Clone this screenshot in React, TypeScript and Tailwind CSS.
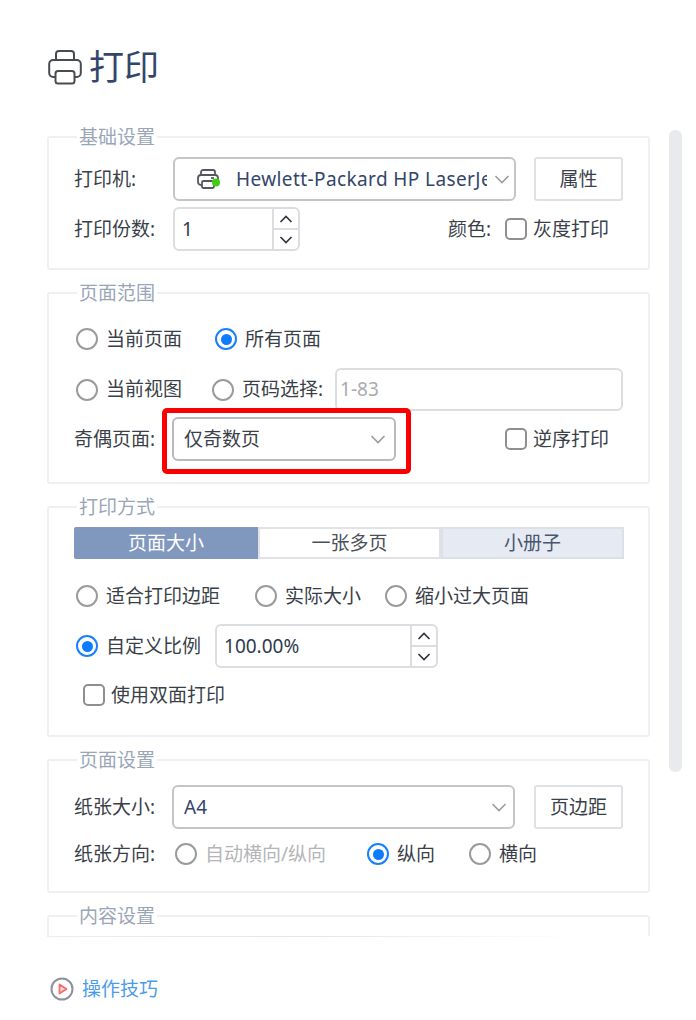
const font = { fontFamily: '"Noto Sans", "Noto Sans CJK SC", sans-serif' };

function Chevron() {
  return (
    <svg width="16" height="9" viewBox="0 0 16 9" fill="none" className="shrink-0">
      <path d="M1.5 1 8 7.5 14.500 1" stroke="#9a9da3" strokeWidth="1.6" />
    </svg>
  );
}

function Radio({ label, checked, disabled, className }: { label: string; checked?: boolean; disabled?: boolean; className?: string }) {
  return (
    <div className={`flex items-center gap-2 ${className ?? ""}`}>
      {checked ? (
        <span className="flex size-[22px] items-center justify-center rounded-full border-2 border-[#1a7fff]">
          <span className="size-[11px] rounded-full bg-[#0f7bff]" />
        </span>
      ) : (
        <span className="size-[22px] rounded-full border-2 border-[#9b9b9b]" />
      )}
      <span className={disabled ? "text-[#b3b5b8]" : "text-[#3a3f49]"}>{label}</span>
    </div>
  );
}

function Checkbox({ label, className }: { label: string; className?: string }) {
  return (
    <div className={`flex items-center gap-[6px] ${className ?? ""}`}>
      <span className="size-[22px] rounded-[5px] border-2 border-[#8f8f8f]" />
      <span className="text-[#3a3f49]">{label}</span>
    </div>
  );
}

function Spinner({ value, width }: { value: string; width: string }) {
  return (
    <div className={`flex h-[44px] items-center rounded-md border-2 border-[#dcdde0] ${width}`}>
      <span className="flex-1 pt-[1px] pl-[7px] text-[#2f3a4f]">{value}</span>
      <div className="flex h-full w-[26px] flex-col border-l-2 border-[#dcdde0]">
        <span className="flex flex-1 items-center justify-center border-b-2 border-[#dcdde0]">
          <svg width="14" height="8" viewBox="0 0 14 8" fill="none">
            <path d="M1.500 7 7 1.500 12.500 7" stroke="#33363c" strokeWidth="1.700" />
          </svg>
        </span>
        <span className="flex flex-1 items-center justify-center">
          <svg width="14" height="8" viewBox="0 0 14 8" fill="none">
            <path d="M1.500 1 7 6.500 12.500 1" stroke="#33363c" strokeWidth="1.700" />
          </svg>
        </span>
      </div>
    </div>
  );
}

function Group({ title, height, children }: { title: string; height: string; children?: React.ReactNode }) {
  return (
    <fieldset className={`rounded-[3px] border-2 border-[#eef0f3] pr-[24px] pl-[25px] ${height}`}>
      <legend className="ml-[3px] px-[2px] text-[19px] leading-[26px] text-[#9aa6b8]">{title}</legend>
      {children}
    </fieldset>
  );
}

function OutlineButton({ label }: { label: string }) {
  return (
    <button className="h-[44px] w-[89px] rounded-[3px] border-2 border-[#dfe1e5] text-[#3a3f49]">{label}</button>
  );
}

export default function App() {
  return (
    <div className="flex h-[1020px] w-[696px] flex-col overflow-hidden bg-white text-[19px]" style={font}>
      <header className="flex h-[124px] shrink-0 items-start pt-[44px] pl-[48px]">
        <svg width="34" height="36" viewBox="0 0 34 36" fill="none" stroke="#484b50" strokeWidth="2" className="mt-[5px]">
          <path d="M8 11V5a3 3 0 0 1 3-3h12a3 3 0 0 1 3 3v6" />
          <rect x="1.200" y="11" width="31.600" height="17" rx="4" />
          <rect x="7.500" y="22" width="19" height="12.500" rx="2.500" fill="#fff" />
        </svg>
        <h1 className="ml-[7px] text-[35px] leading-[46px] text-[#33456b]">打印</h1>
      </header>

      <div className="flex h-[812px] shrink-0 items-start">
        <div className="ml-[47px] flex h-full w-[603px] flex-col gap-[10px] overflow-hidden">
          <Group title="基础设置" height="h-[146px] shrink-0">
            <div className="mt-[7px] flex h-[44px] items-center">
              <span className="w-[99px] text-[#3a3f49]">打印机:</span>
              <div className="flex h-[44px] w-[343px] items-center rounded-md border-2 border-[#c4c5c8] pl-[21px]">
                <svg width="24" height="24" viewBox="0 0 24 24" fill="none" stroke="#55585e" strokeWidth="1.800" className="shrink-0">
                  <path d="M5 8V5a2 2 0 0 1 2-2h10a2 2 0 0 1 2 2v3" />
                  <rect x="2" y="8" width="20" height="10" rx="3" />
                  <rect x="6" y="14" width="12" height="7" rx="1.500" fill="#fff" />
                  <path d="M15 11h3" />
                  <circle cx="20" cy="15.500" r="4" fill="#43cc12" stroke="none" />
                </svg>
                <span className="ml-[16px] w-[251px] overflow-hidden text-[19px] tracking-[0.4px] whitespace-nowrap text-[#33456b]">
                  Hewlett-Packard HP LaserJet
                </span>
                <span className="ml-[7px]"><Chevron /></span>
              </div>
              <span className="ml-[18px]"><OutlineButton label="属性" /></span>
            </div>
            <div className="mt-[6px] flex h-[44px] items-center">
              <span className="w-[99px] text-[#3a3f49]">打印份数:</span>
              <Spinner value="1" width="w-[127px]" />
              <span className="ml-[148px] w-[57px] text-[#3a3f49]">颜色:</span>
              <Checkbox label="灰度打印" />
            </div>
          </Group>

          <Group title="页面范围" height="h-[204px] shrink-0">
            <div className="mt-[11px] flex h-[44px] items-center">
              <Radio label="当前页面" className="ml-[2px]" />
              <Radio label="所有页面" checked className="ml-[33px]" />
            </div>
            <div className="mt-[7px] flex h-[43px] items-center">
              <Radio label="当前视图" className="ml-[2px]" />
              <Radio label="页码选择:" className="ml-[30px]" />
              <div className="ml-[12px] flex h-[43px] w-[288px] items-center rounded-md border-2 border-[#dcdde0] pl-[3px] text-[#a9abae]">
                1-83
              </div>
            </div>
            <div className="mt-[6px] flex h-[44px] items-center">
              <span className="w-[98px] text-[#3a3f49]">奇偶页面:</span>
              <div className="relative">
                <div className="flex h-[44px] w-[224px] items-center justify-between rounded-md border-2 border-[#b9babd] pr-[8px] pl-[10px] text-[#3a3f49]">
                  仅奇数页
                  <Chevron />
                </div>
                <div className="absolute -top-[9px] -right-[15px] -bottom-[13px] -left-[10px] rounded-[5px] border-[5px] border-[#fb0000]" />
              </div>
              <Checkbox label="逆序打印" className="ml-[109px]" />
            </div>
          </Group>

          <Group title="打印方式" height="h-[243px] shrink-0">
            <div className="mt-[7px] flex h-[32px] w-[550px]">
              <span className="flex w-[184px] items-center justify-center rounded-l-[2px] bg-[#8198be] text-white">页面大小</span>
              <span className="flex w-[183px] items-center justify-center border-2 border-[#e0e2e6] text-[#4a4f59]">一张多页</span>
              <span className="flex w-[183px] items-center justify-center border-2 border-[#dde1e7] bg-[#e6ebf3] text-[#4a5670]">小册子</span>
            </div>
            <div className="mt-[15px] flex h-[44px] items-center">
              <Radio label="适合打印边距" className="ml-[2px]" />
              <Radio label="实际大小" className="ml-[35px]" />
              <Radio label="缩小过大页面" className="ml-[24px]" />
            </div>
            <div className="mt-[6px] flex h-[44px] items-center">
              <Radio label="自定义比例" checked className="ml-[2px]" />
              <span className="ml-[14px]"><Spinner value="100.00%" width="w-[223px]" /></span>
            </div>
            <div className="mt-[5px] flex h-[44px] items-center">
              <Checkbox label="使用双面打印" className="ml-[9px]" />
            </div>
          </Group>

          <Group title="页面设置" height="h-[146px] shrink-0">
            <div className="mt-[12px] flex h-[44px] items-center">
              <span className="w-[98px] text-[#3a3f49]">纸张大小:</span>
              <div className="flex h-[44px] w-[343px] items-center justify-between rounded-md border-2 border-[#c4c5c8] pr-[6px] pl-[10px] text-[#33456b]">
                A4
                <Chevron />
              </div>
              <span className="ml-[19px]"><OutlineButton label="页边距" /></span>
            </div>
            <div className="mt-[3px] flex h-[44px] items-center">
              <span className="w-[101px] text-[#3a3f49]">纸张方向:</span>
              <Radio label="自动横向/纵向" disabled />
              <Radio label="纵向" checked className="ml-[41px]" />
              <Radio label="横向" className="ml-[34px]" />
            </div>
          </Group>

          <Group title="内容设置" height="h-[146px] shrink-0" />
        </div>
        <div className="mt-[6px] ml-[19px] h-[642px] w-[13px] rounded-md bg-[#e8eaed]" />
      </div>

      <div className="ml-[47px] h-px w-[530px] shrink-0 bg-gradient-to-r from-[#eceef0] via-[#e4e6e9] to-white" />

      <footer className="mt-[38px] ml-[50px] flex items-center gap-[8px]">
        <svg width="24" height="24" viewBox="0 0 24 24" fill="none">
          <circle cx="12" cy="12" r="10.500" stroke="#8d919c" strokeWidth="2" />
          <path d="M9.500 7.500v9l7-4.500z" fill="#ffd9d9" stroke="#f76c6c" strokeWidth="1.800" strokeLinejoin="round" />
        </svg>
        <span className="text-[#4b9ce8]">操作技巧</span>
      </footer>
    </div>
  );
}
